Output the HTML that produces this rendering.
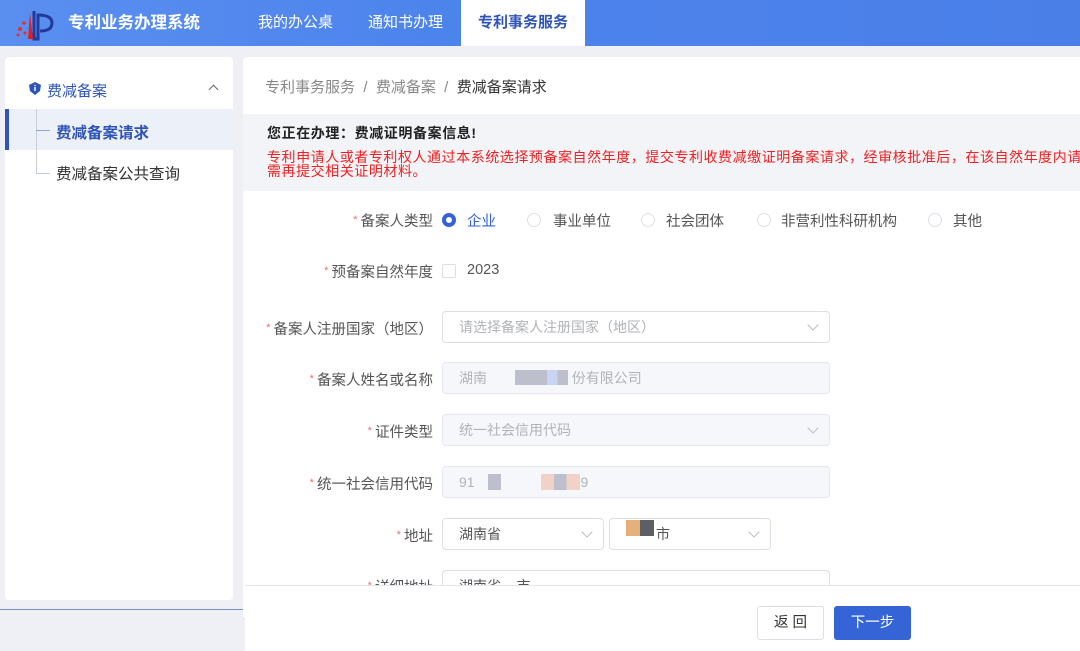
<!DOCTYPE html>
<html><head><meta charset="utf-8"><style>
*{margin:0;padding:0;box-sizing:border-box}
body{width:1080px;height:651px;overflow:hidden;background:#eef0f5;font-family:"Liberation Sans","Noto Sans CJK SC",sans-serif;position:relative;color:#333}
.hdr{position:absolute;left:0;top:0;width:1080px;height:46px;background:linear-gradient(90deg,#5a8ff0,#4d84ec 40%,#4a7fe8)}
.hdr .t{position:absolute;top:0;height:46px;line-height:46px;color:#fff;font-size:15px}
.side{position:absolute;left:5px;top:57px;width:228px;height:543px;background:#fff;border-radius:4px}
.main{position:absolute;left:243px;top:57px;width:837px;height:560px;background:#fff;border-radius:4px 0 0 0;overflow:hidden}
.lab{position:absolute;font-size:14.5px;color:#555;text-align:right;width:190px}
.lab::before{content:"* ";color:#f56c6c;font-size:11px;vertical-align:3px}
.inp{position:absolute;height:32px;border:1px solid #dcdfe6;border-radius:4px;font-size:14px;color:#b0b3b8;line-height:30px;padding-left:16px;background:#fff}
.dis{background:#f5f7fa;border-color:#e4e7ed}
.arr{position:absolute;right:12px;top:9px;width:8px;height:8px;border-right:1px solid #b8bcc4;border-bottom:1px solid #b8bcc4;transform:rotate(45deg)}
.rad{position:absolute;top:213px;width:14px;height:14px;border:1px solid #dcdfe6;border-radius:50%}
.rt{position:absolute;top:210px;font-size:14.5px;color:#555}
</style></head><body>
<div class="hdr">
<svg style="position:absolute;left:14px;top:7px" width="46" height="34" viewBox="0 0 46 34"><path d="M20 4 L20 32 L24 32 L24 8 Q38 8 38 16 Q38 24 26 24" fill="none" stroke="#233a9a" stroke-width="3"/><path d="M16 6 L14 32 L19 32 Z" fill="#e02020"/><circle cx="6" cy="22" r="2" fill="#e03030"/><circle cx="10" cy="16" r="1.8" fill="#e03030"/><circle cx="4" cy="28" r="1.5" fill="#e03030"/><circle cx="11" cy="26" r="1.5" fill="#e03030"/></svg>
<div class="t" style="left:68px;font-size:16.5px;font-weight:bold">专利业务办理系统</div>
<div class="t" style="left:258px">我的办公桌</div>
<div class="t" style="left:368px">通知书办理</div>
<div class="t" style="left:461px;width:124px;background:#fff;color:#2f54b8;text-align:center;font-weight:bold">专利事务服务</div>
</div>
<div class="side">
<svg style="position:absolute;left:24px;top:25px" width="12" height="13" viewBox="0 0 12 13"><path d="M6 0 L12 3 L11 9 L6 13 L1 9 L0 3 Z" fill="#2f54b8"/><rect x="5.3" y="5" width="1.4" height="4" fill="#fff"/><circle cx="6" cy="3.5" r=".8" fill="#fff"/></svg>
<div style="position:absolute;left:42px;top:23px;font-size:15px;color:#2f54b8">费减备案</div>
<div style="position:absolute;left:205px;top:29px;width:7px;height:7px;border-left:1.5px solid #666;border-top:1.5px solid #666;transform:rotate(45deg)"></div>
<div style="position:absolute;left:0;top:52px;width:228px;height:41px;background:#ecf0f8;border-left:4px solid #2f54b8"></div>
<div style="position:absolute;left:31px;top:52px;width:1px;height:65px;background:#c8cdd8"></div>
<div style="position:absolute;left:31px;top:73px;width:14px;height:1px;background:#8fa6dc"></div>
<div style="position:absolute;left:31px;top:116px;width:14px;height:1px;background:#c8cdd8"></div>
<div style="position:absolute;left:51px;top:64px;font-size:15.5px;color:#2f54b8;font-weight:bold">费减备案请求</div>
<div style="position:absolute;left:51px;top:105px;font-size:15.5px;color:#333">费减备案公共查询</div>
</div>
<div style="position:absolute;left:0;top:609px;width:245px;height:1px;background:#7a8fc4"></div>
<div class="main">
<div style="position:absolute;left:22px;top:19px;font-size:15px;color:#888">专利事务服务 &nbsp;/&nbsp; 费减备案 &nbsp;/&nbsp; <span style="color:#333">费减备案请求</span></div>
<div style="position:absolute;left:0;top:57px;width:837px;height:77px;background:#f2f4f8"></div>
<div style="position:absolute;left:24px;top:66px;font-size:14px;letter-spacing:.6px;font-weight:bold;color:#222">您正在办理：费减证明备案信息!</div>
<div style="position:absolute;left:24px;top:93px;font-size:14px;letter-spacing:.55px;line-height:14px;color:#f02020;white-space:nowrap">专利申请人或者专利权人通过本系统选择预备案自然年度，提交专利收费减缴证明备案请求，经审核批准后，在该自然年度内请<br>需再提交相关证明材料。</div>
</div>
<div class="lab" style="top:210px;left:243px">备案人类型</div>
<div class="rad" style="left:442px;border:4px solid #3461d8"></div><div class="rt" style="left:467px;color:#3461d8">企业</div>
<div class="rad" style="left:527px"></div><div class="rt" style="left:553px">事业单位</div>
<div class="rad" style="left:641px"></div><div class="rt" style="left:666px">社会团体</div>
<div class="rad" style="left:757px"></div><div class="rt" style="left:781px">非营利性科研机构</div>
<div class="rad" style="left:928px"></div><div class="rt" style="left:953px">其他</div>
<div class="lab" style="top:261px;left:243px">预备案自然年度</div>
<div style="position:absolute;left:442px;top:264px;width:14px;height:14px;border:1px solid #dcdfe6;border-radius:2px"></div>
<div class="rt" style="left:467px;top:262px">2023</div>
<div class="lab" style="top:318px;left:243px">备案人注册国家（地区）</div>
<div class="inp" style="left:442px;top:311px;width:388px">请选择备案人注册国家（地区）<i class="arr"></i></div>
<div class="lab" style="top:369px;left:243px">备案人姓名或名称</div>
<div class="inp dis" style="left:442px;top:362px;width:388px">湖南 <span style="display:inline-block;width:53px;height:15px;background:linear-gradient(90deg,#bdbfcc 60%,#c8d4f4 60%,#c8d4f4 80%,#bdbfcc 80%);margin-left:24px;vertical-align:-2px"></span> 份有限公司</div>
<div class="lab" style="top:421px;left:243px">证件类型</div>
<div class="inp dis" style="left:442px;top:414px;width:388px">统一社会信用代码<i class="arr"></i></div>
<div class="lab" style="top:473px;left:243px">统一社会信用代码</div>
<div class="inp dis" style="left:442px;top:466px;width:388px">91 <span style="display:inline-block;width:13px;height:16px;background:#bdbfcc;margin-left:10px;vertical-align:-3px"></span><span style="display:inline-block;width:39px;height:16px;background:linear-gradient(90deg,#f2d2c8 33%,#bdbfcc 33%,#bdbfcc 66%,#f2d2c8 66%);margin-left:40px;vertical-align:-3px"></span>9</div>
<div class="lab" style="top:525px;left:243px">地址</div>
<div class="inp" style="left:442px;top:518px;width:162px;color:#555">湖南省<i class="arr"></i></div>
<div class="inp" style="left:609px;top:518px;width:162px;color:#555"><span style="position:absolute;left:16px;top:1px;width:28px;height:16px;background:linear-gradient(90deg,#e6b07a 50%,#5c5f66 50%)"></span><span style="margin-left:30px">市</span><i class="arr"></i></div>
<div class="inp" style="left:442px;top:570px;width:388px;color:#555">湖南省 &nbsp;&nbsp; 市</div>
<div class="lab" style="top:576px;left:243px">详细地址</div>
<div style="position:absolute;left:245px;top:585px;width:835px;height:66px;background:#fff;border-top:1px solid #e4e7ed"></div>
<div style="position:absolute;left:757px;top:606px;width:67px;height:34px;border:1px solid #dcdfe6;border-radius:3px;font-size:14.5px;line-height:32px;text-align:center;color:#333;background:#fff">返 回</div>
<div style="position:absolute;left:834px;top:606px;width:77px;height:34px;border-radius:3px;font-size:14.5px;line-height:34px;text-align:center;color:#fff;background:#3464d6">下一步</div>
</body></html>
